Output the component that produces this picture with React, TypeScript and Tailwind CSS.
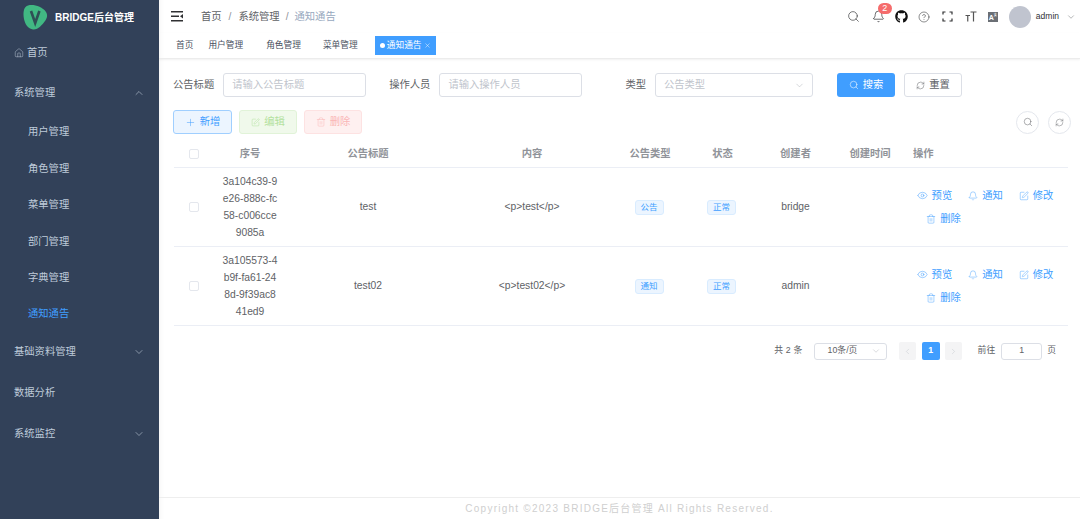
import {Bell, ChevronDown, ChevronLeft, ChevronRight, ChevronUp, CircleHelp, Eye, House, Plus, RefreshCw, Search, SquarePen, Trash2, X} from "lucide-react";
import {FaGithub} from "react-icons/fa";
import {ReactNode} from "react";

const font = "font-['Liberation_Sans','Noto_Sans_CJK_SC',sans-serif]";
const gridCols = "grid grid-cols-[40px_72px_164px_164px_72px_73px_73px_76px_160px]";

const Logo = () => (
    <svg width="26" height="26" viewBox="0 0 26 26">
        <path d="M6 1.500C11 0 20 2 24 8c2 3.500 1 6-1 9-3 4-7 9-12 8.500C6 25 3 20 2 15 1 10 1 3 6 1.500Z" fill="#41b883"/>
        <path d="M9 7l4.200 12L17.400 7" fill="none" stroke="#2f4f55" strokeWidth="2.600"/>
    </svg>
);

const MenuTop = ({label, h, open, arrow}: {label: string, h: string, open?: boolean, arrow?: boolean}) => (
    <div className={`flex items-center justify-between pl-[14px] pr-[14px] ${h}`}>
        <span>{label}</span>
        {arrow ? (open ? <ChevronUp size={12} strokeWidth={1.2}/> : <ChevronDown size={12} strokeWidth={1.2}/>) : null}
    </div>
);

const Sidebar = () => (
    <aside className="w-[159px] shrink-0 bg-[#324159] text-[#bfcbd9] text-[10.300px]">
        <div className="flex items-center h-[33px] pl-[22px] gap-[7px] pt-[1px]">
            <Logo/>
            <span className="text-white font-bold text-[10px] whitespace-nowrap">BRIDGE后台管理</span>
        </div>
        <div className="flex items-center h-[38px] pl-[14px] gap-[3px] mt-[1px]">
            <House size={10} strokeWidth={1.2}/>
            <span>首页</span>
        </div>
        <MenuTop label="系统管理" h="h-[41px]" open arrow/>
        <div className="flex flex-col pt-[1px]">
            {['用户管理', '角色管理', '菜单管理', '部门管理', '字典管理', '通知通告'].map(item => (
                <div key={item} className={`h-[36.400px] flex items-center pl-[28px] ${item === '通知通告' ? 'text-[#409eff]' : ''}`}>{item}</div>
            ))}
        </div>
        <MenuTop label="基础资料管理" h="h-[39px]" arrow/>
        <MenuTop label="数据分析" h="h-[42px]"/>
        <MenuTop label="系统监控" h="h-[41px]" arrow/>
    </aside>
);

const Hamburger = () => (
    <svg width="12" height="11" viewBox="0 0 12 11" fill="#303133">
        <rect x="0" y="0" width="12" height="1.500"/>
        <rect x="0" y="4.500" width="8" height="1.500"/>
        <rect x="0" y="9" width="12" height="1.500"/>
        <path d="M12 3v4.500L9 5.250Z"/>
    </svg>
);

const FullIcon = () => (
    <svg width="11" height="11" viewBox="0 0 11 11" fill="none" stroke="#303133" strokeWidth="1.200">
        <path d="M1 3.500V1h2.500M7.500 1H10v2.500M10 7.500V10H7.500M3.500 10H1V7.500"/>
    </svg>
);

const SizeIcon = () => (
    <svg width="12" height="11" viewBox="0 0 12 11" fill="none" stroke="#555" strokeWidth="1.200">
        <path d="M0.500 4.500h4.500M2.750 4.500V10.500M5.500 1h6M8.500 1v9.500"/>
    </svg>
);

const LangIcon = () => (
    <span className="w-[10px] h-[10px] bg-[#6b6f75] text-white font-bold flex items-start justify-center leading-none pt-[2px]">
        <span className="text-[7px] leading-none">A</span>
        <span className="text-[3px] leading-none">文</span>
    </span>
);

const Header = () => (
    <div className="h-[33px] flex items-center pl-[12px] text-[10.300px] shrink-0">
        <Hamburger/>
        <div className="flex items-center ml-[18px] text-[#606266]">
            <span>首页</span>
            <span className="mx-[7px] text-[#909399]">/</span>
            <span>系统管理</span>
            <span className="mx-[6px] text-[#909399]">/</span>
            <span className="text-[#97a8be]">通知通告</span>
        </div>
        <div className="ml-auto flex items-center text-[#303133]">
            <Search size={13} strokeWidth={1.200}/>
            <div className="relative ml-[12px]">
                <Bell size={13} strokeWidth={1.300}/>
                <span className="absolute -top-[7px] left-[6px] w-[14px] h-[11px] rounded-full bg-[#f56c6c] text-white text-[9px] leading-[11px] text-center">2</span>
            </div>
            <FaGithub size={13} className="ml-[10px] text-[#111]"/>
            <CircleHelp size={12} strokeWidth={1.100} className="ml-[10px]"/>
            <span className="ml-[12px] flex"><FullIcon/></span>
            <span className="ml-[12px] flex"><SizeIcon/></span>
            <span className="ml-[11px] flex"><LangIcon/></span>
            <span className="ml-[11px] w-[22px] h-[22px] rounded-full bg-[#c0c4cf]"/>
            <span className="ml-[5px] text-[8.500px] text-[#303133]">admin</span>
            <ChevronDown size={10} strokeWidth={1.100} className="ml-[7px] mr-[4px] text-[#606266]"/>
        </div>
    </div>
);

const Tabs = () => (
    <div className="h-[26px] shrink-0 flex items-center pl-[17px] text-[8.700px] text-[#495060] border-b border-[#ececec] shadow-[0_1px_2px_rgba(0,0,0,0.06)]">
        <span>首页</span>
        <span className="ml-[15px]">用户管理</span>
        <span className="ml-[23px]">角色管理</span>
        <span className="ml-[22px]">菜单管理</span>
        <span className="ml-[17px] h-[19px] w-[61px] bg-[#409eff] text-white flex items-center justify-center gap-[2px]">
            <span className="w-[5px] h-[5px] rounded-full bg-white"/>
            通知通告
            <X size={7} strokeWidth={1.500}/>
        </span>
    </div>
);

const Field = ({children, w, ml}: {children: ReactNode, w: string, ml: string}) => (
    <div className={`h-[24px] border border-[#dcdfe6] rounded-[3px] flex items-center justify-between pl-[8px] pr-[7px] text-[#c0c4cc] ${w} ${ml}`}>
        {children}
    </div>
);

const Filters = () => (
    <div className="flex items-center h-[24px] text-[10.300px] text-[#606266]">
        <span>公告标题</span>
        <Field w="w-[143px]" ml="ml-[9px]">请输入公告标题</Field>
        <span className="ml-[23px]">操作人员</span>
        <Field w="w-[143px]" ml="ml-[9px]">请输入操作人员</Field>
        <span className="ml-[43px]">类型</span>
        <Field w="w-[158px]" ml="ml-[9px]">
            公告类型
            <ChevronDown size={11} strokeWidth={1} className="text-[#a8abb2]"/>
        </Field>
        <button className="ml-[24px] w-[58px] h-[24px] rounded-[3px] bg-[#409eff] text-white flex items-center justify-center gap-[4px]">
            <Search size={10} strokeWidth={1.300}/>搜索
        </button>
        <button className="ml-[9px] w-[58px] h-[24px] rounded-[3px] border border-[#dcdfe6] text-[#606266] flex items-center justify-center gap-[4px]">
            <RefreshCw size={9} strokeWidth={1.300}/>重置
        </button>
    </div>
);

const Toolbar = () => (
    <div className="flex items-center h-[24px] mt-[13px] text-[10.300px]">
        <button className="w-[59px] h-[24px] rounded-[3px] border border-[#a0cfff] bg-[#ecf5ff] text-[#409eff] flex items-center justify-center gap-[4px]">
            <Plus size={11} strokeWidth={1.100}/>新增
        </button>
        <button className="ml-[7px] w-[58px] h-[24px] rounded-[3px] border border-[#e1f3d8] bg-[#f0f9eb] text-[#b3e19d] flex items-center justify-center gap-[4px]">
            <SquarePen size={9} strokeWidth={1.300}/>编辑
        </button>
        <button className="ml-[7px] w-[58px] h-[24px] rounded-[3px] border border-[#fde2e2] bg-[#fef0f0] text-[#fab6b6] flex items-center justify-center gap-[4px]">
            <Trash2 size={10} strokeWidth={1.200}/>删除
        </button>
        <div className="ml-auto flex items-center gap-[9px] -mr-[3px] text-[#606266]">
            <span className="w-[23px] h-[23px] rounded-full border border-[#e4e7ed] flex items-center justify-center"><Search size={10} strokeWidth={1.200}/></span>
            <span className="w-[23px] h-[23px] rounded-full border border-[#e4e7ed] flex items-center justify-center"><RefreshCw size={9} strokeWidth={1.200}/></span>
        </div>
    </div>
);

const Checkbox = () => <span className="w-[10px] h-[10px] rounded-[2px] border border-[#e4e7ed] bg-white"/>;

const Tag = ({children}: {children: ReactNode}) => (
    <span className="w-[29px] h-[15px] rounded-[3px] border border-[#d9ecff] bg-[#ecf5ff] text-[#409eff] text-[8.500px] flex items-center justify-center">{children}</span>
);

const Action = ({icon, label}: {icon: ReactNode, label: string}) => (
    <span className="flex items-center gap-[4px] text-[#409eff]">{icon}{label}</span>
);

const Actions = () => (
    <div className="flex flex-col items-center gap-[9px] text-[10.300px] leading-[14px] pr-[6px]">
        <div className="flex items-center gap-[16px]">
            <Action icon={<Eye size={11} strokeWidth={1.100}/>} label="预览"/>
            <Action icon={<Bell size={10} strokeWidth={1.100}/>} label="通知"/>
            <Action icon={<SquarePen size={10} strokeWidth={1.100}/>} label="修改"/>
        </div>
        <div className="pr-[83px] flex">
            <Action icon={<Trash2 size={10} strokeWidth={1.100}/>} label="删除"/>
        </div>
    </div>
);

const rows = [
    {id: ['3a104c39-9', 'e26-888c-fc', '58-c006cce', '9085a'], title: 'test', content: '<p>test</p>', type: '公告', user: 'bridge'},
    {id: ['3a105573-4', 'b9f-fa61-24', '8d-9f39ac8', '41ed9'], title: 'test02', content: '<p>test02</p>', type: '通知', user: 'admin'},
];

const Table = () => (
    <div className="mt-[8px] ml-[1px] w-[894px]">
        <div className={`${gridCols} h-[26px] pb-[2px] items-center border-b border-[#ebeef5] text-[10.300px] font-bold text-[#909399] text-center`}>
            <span className="flex justify-center"><Checkbox/></span>
            <span>序号</span>
            <span>公告标题</span>
            <span>内容</span>
            <span>公告类型</span>
            <span>状态</span>
            <span>创建者</span>
            <span>创建时间</span>
            <span className="text-left pl-[5px]">操作</span>
        </div>
        {rows.map(row => (
            <div key={row.title} className={`${gridCols} h-[79px] items-center border-b border-[#ebeef5] text-[10.300px] text-[#606266] text-center`}>
                <span className="flex justify-center"><Checkbox/></span>
                <div className="flex flex-col leading-[17px]">
                    {row.id.map(line => <span key={line}>{line}</span>)}
                </div>
                <span>{row.title}</span>
                <span>{row.content}</span>
                <span className="flex justify-center pr-[2px]"><Tag>{row.type}</Tag></span>
                <span className="flex justify-center pr-[2px]"><Tag>正常</Tag></span>
                <span>{row.user}</span>
                <span/>
                <Actions/>
            </div>
        ))}
    </div>
);

const Pagination = () => (
    <div className="flex items-center justify-end h-[18px] mt-[16px] pr-[12px] text-[8.800px] text-[#606266]">
        <span className="tracking-[0.2px]">共 2 条</span>
        <div className="ml-[11px] w-[73px] h-[17px] border border-[#dcdfe6] rounded-[3px] flex items-center justify-between pl-[13px] pr-[5px]">
            10条/页
            <ChevronDown size={10} strokeWidth={1} className="text-[#a8abb2]"/>
        </div>
        <span className="ml-[12px] w-[17px] h-[18px] rounded-[2px] bg-[#f4f4f5] text-[#c0c4cc] flex items-center justify-center"><ChevronLeft size={9} strokeWidth={1.200}/></span>
        <span className="ml-[6px] w-[18px] h-[18px] rounded-[2px] bg-[#409eff] text-white font-bold flex items-center justify-center">1</span>
        <span className="ml-[5px] w-[17px] h-[18px] rounded-[2px] bg-[#f4f4f5] text-[#c0c4cc] flex items-center justify-center"><ChevronRight size={9} strokeWidth={1.200}/></span>
        <span className="ml-[16px]">前往</span>
        <span className="ml-[6px] w-[41px] h-[17px] border border-[#dcdfe6] rounded-[3px] flex items-center justify-center">1</span>
        <span className="ml-[5px]">页</span>
    </div>
);

const App = () => {
    return (
        <div className={`${font} w-[1080px] h-[519px] flex overflow-hidden bg-white`}>
            <Sidebar/>
            <main className="flex-1 min-w-0 flex flex-col shadow-[inset_5px_0_5px_-4px_rgba(0,0,0,0.05)]">
                <Header/>
                <Tabs/>
                <div className="flex-1 pt-[14px] pl-[14px] pr-[12px]">
                    <Filters/>
                    <Toolbar/>
                    <Table/>
                    <Pagination/>
                </div>
                <footer className="h-[22px] shrink-0 border-t border-[#eeeeee] flex items-center justify-center text-[10px] text-[#cfcfcf] tracking-[1.250px]">
                    Copyright ©2023 BRIDGE后台管理 All Rights Reserved.
                </footer>
            </main>
        </div>
    );
};

export default App;
